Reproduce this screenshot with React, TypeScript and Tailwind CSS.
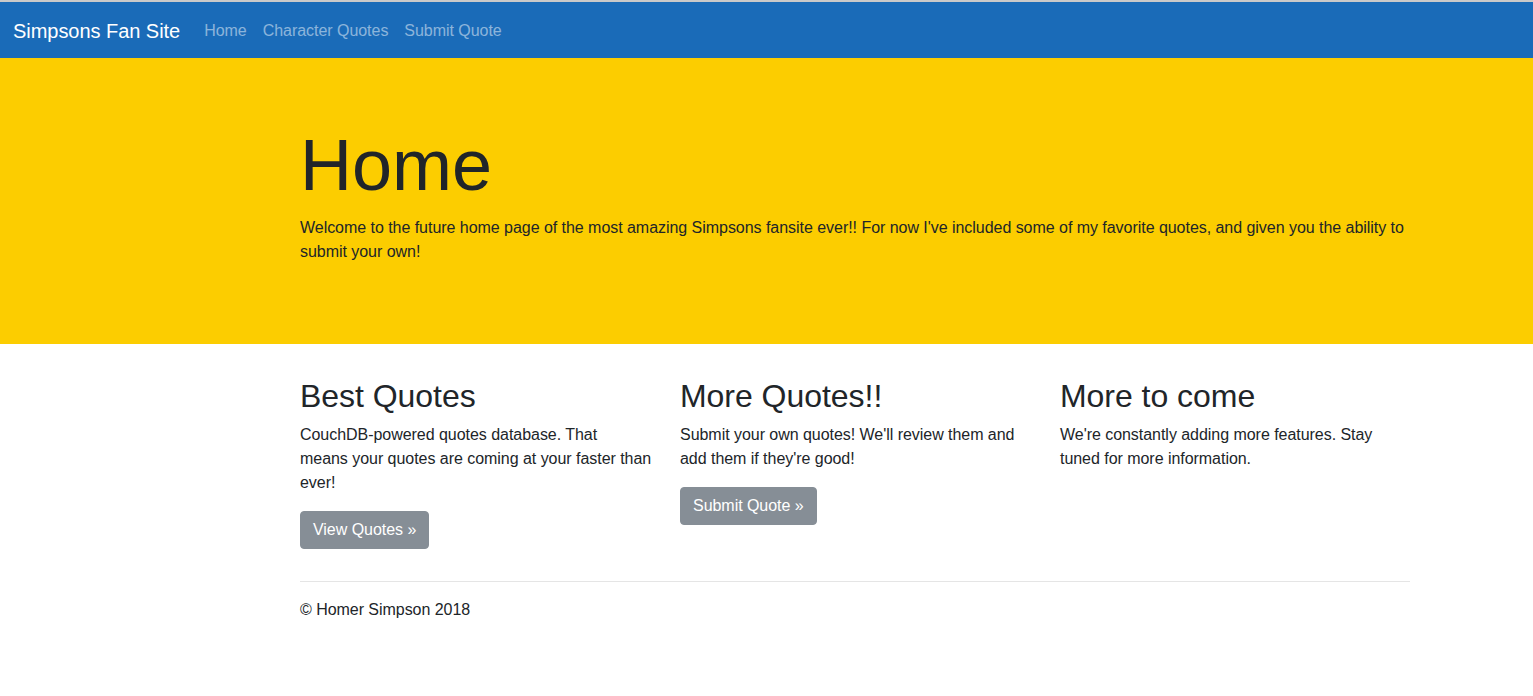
import { Fragment } from "react"

export default function App() {
  const links = ["Home", "Character Quotes", "Submit Quote"]
  const cols = [
    {
      title: "Best Quotes",
      lines: ["CouchDB-powered quotes database. That", "means your quotes are coming at your faster than", "ever!"],
      btn: "View Quotes »",
    },
    {
      title: "More Quotes!!",
      lines: ["Submit your own quotes! We'll review them and", "add them if they're good!"],
      btn: "Submit Quote »",
    },
    {
      title: "More to come",
      lines: ["We're constantly adding more features. Stay", "tuned for more information."],
      btn: "",
    },
  ]

  return (
    <div className="min-h-[696px] bg-white text-[#212529] font-['Liberation_Sans',Arial,sans-serif] text-base leading-6 tracking-[-0.04px]">
      <nav className="flex items-center h-[58px] border-t-2 border-[#c9c9c9] bg-[#1a6bb8] px-[13px] pt-[2px]">
        <span className="mr-4 text-[20px] leading-[30px] text-white">Simpsons Fan Site</span>
        <ul className="flex">
          {links.map((l) => (
            <li key={l} className="px-2 text-white/50">
              {l}
            </li>
          ))}
        </ul>
      </nav>

      <header className="bg-[#fccd00] pt-16 pb-16 mb-8">
        <div className="ml-[300px] w-[1110px]">
          <h1 className="text-[72px] leading-[1.2] mb-2">Home</h1>
          <p className="mb-4">
            Welcome to the future home page of the most amazing Simpsons fansite ever!! For now I've included some of my favorite quotes, and given you the ability to submit your own!
          </p>
        </div>
      </header>

      <main className="ml-[300px] w-[1110px]">
        <div className="grid grid-cols-3 gap-[30px]">
          {cols.map((c) => (
            <div key={c.title}>
              <h2 className="text-[32px] leading-[1.2] pt-px mb-[7px]">{c.title}</h2>
              <p className="mb-4 whitespace-nowrap">
                {c.lines.map((t, i) => (
                  <Fragment key={i}>
                    {i > 0 && <br />}
                    {t}
                  </Fragment>
                ))}
              </p>
              {c.btn && (
                <p className="mb-4">
                  <span className="inline-block rounded border border-[#868e96] bg-[#868e96] text-white px-3 py-1.5 leading-6">
                    {c.btn}
                  </span>
                </p>
              )}
            </div>
          ))}
        </div>
        <hr className="mt-4 mb-4 border-t border-black/10" />
        <footer>
          <p>© Homer Simpson 2018</p>
        </footer>
      </main>
    </div>
  )
}
